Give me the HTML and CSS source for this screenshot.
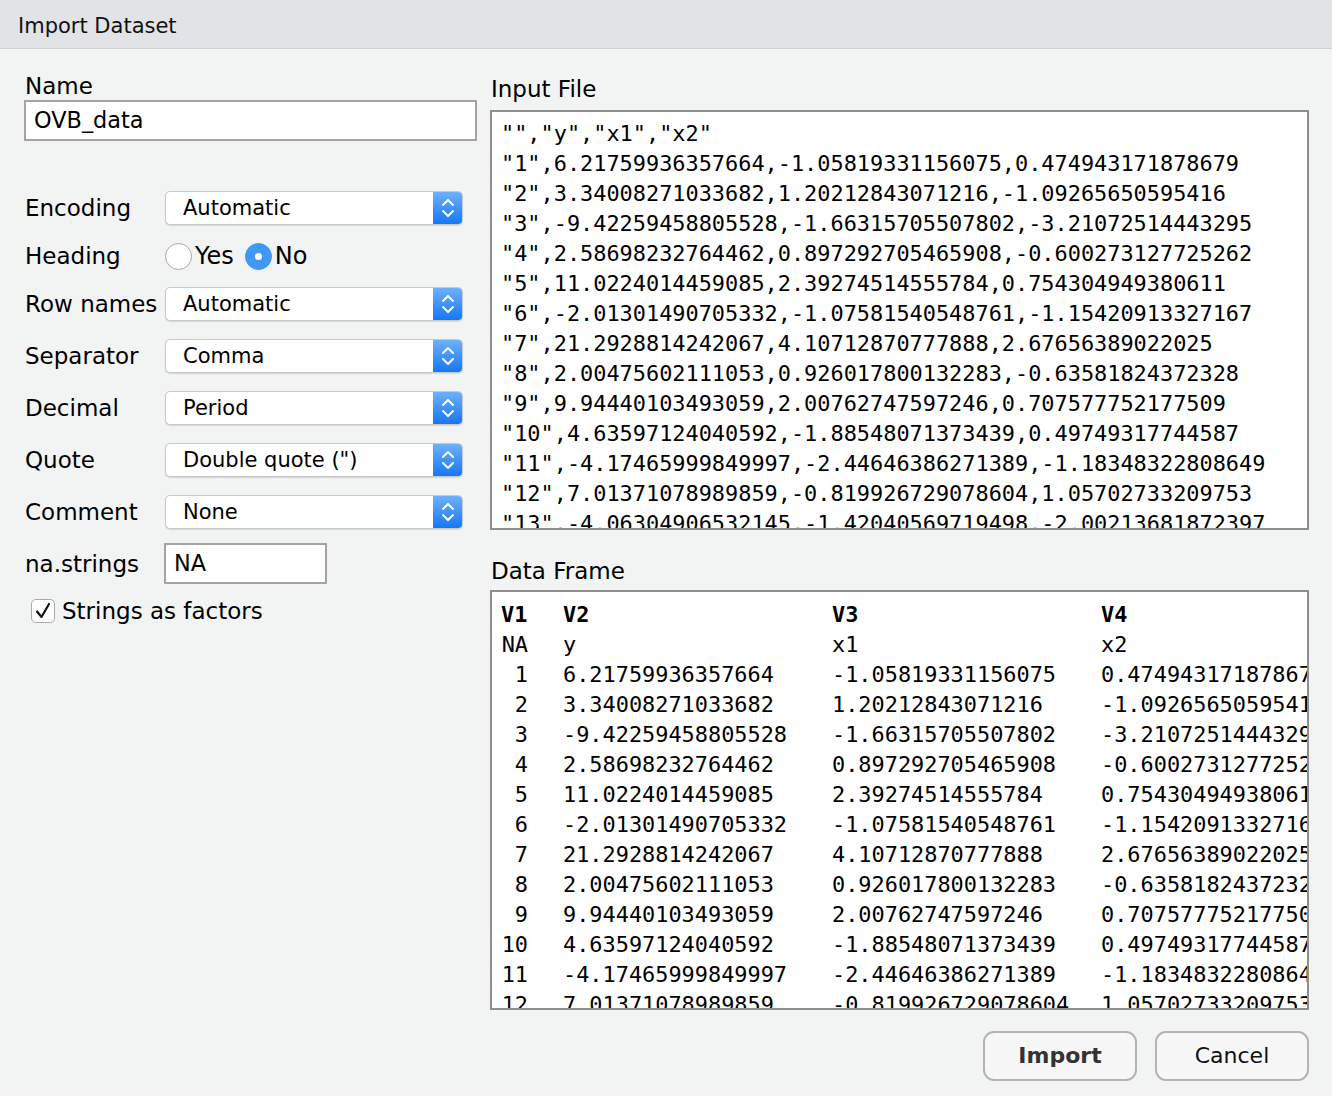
FILE: index.html
```html
<!DOCTYPE html>
<html>
<head>
<meta charset="utf-8">
<title>Import Dataset</title>
<link rel="stylesheet" href="styles.css">
</head>
<body>
<div class="window">
  <div class="titlebar">Import Dataset</div>
  <div class="main">
    <div class="left">
      <div class="label name-label">Name</div>
      <div class="textbox name-box">OVB_data</div>
      <div class="form">
        <div class="label">Encoding</div>
        <div class="select"><span class="sel-text">Automatic</span><span class="sel-btn"><svg width="14" height="24" viewBox="0 0 14 24"><path d="M2 9 L7 4 L12 9 M2 15 L7 20 L12 15" fill="none" stroke="#fff" stroke-width="2" stroke-linecap="round" stroke-linejoin="round"/></svg></span></div>

        <div class="label">Heading</div>
        <div class="radios">
          <span class="radio"></span><span class="radio-label">Yes</span>
          <span class="radio checked"></span><span class="radio-label">No</span>
        </div>

        <div class="label">Row names</div>
        <div class="select"><span class="sel-text">Automatic</span><span class="sel-btn"><svg width="14" height="24" viewBox="0 0 14 24"><path d="M2 9 L7 4 L12 9 M2 15 L7 20 L12 15" fill="none" stroke="#fff" stroke-width="2" stroke-linecap="round" stroke-linejoin="round"/></svg></span></div>

        <div class="label">Separator</div>
        <div class="select"><span class="sel-text">Comma</span><span class="sel-btn"><svg width="14" height="24" viewBox="0 0 14 24"><path d="M2 9 L7 4 L12 9 M2 15 L7 20 L12 15" fill="none" stroke="#fff" stroke-width="2" stroke-linecap="round" stroke-linejoin="round"/></svg></span></div>

        <div class="label">Decimal</div>
        <div class="select"><span class="sel-text">Period</span><span class="sel-btn"><svg width="14" height="24" viewBox="0 0 14 24"><path d="M2 9 L7 4 L12 9 M2 15 L7 20 L12 15" fill="none" stroke="#fff" stroke-width="2" stroke-linecap="round" stroke-linejoin="round"/></svg></span></div>

        <div class="label">Quote</div>
        <div class="select"><span class="sel-text">Double quote (")</span><span class="sel-btn"><svg width="14" height="24" viewBox="0 0 14 24"><path d="M2 9 L7 4 L12 9 M2 15 L7 20 L12 15" fill="none" stroke="#fff" stroke-width="2" stroke-linecap="round" stroke-linejoin="round"/></svg></span></div>

        <div class="label">Comment</div>
        <div class="select"><span class="sel-text">None</span><span class="sel-btn"><svg width="14" height="24" viewBox="0 0 14 24"><path d="M2 9 L7 4 L12 9 M2 15 L7 20 L12 15" fill="none" stroke="#fff" stroke-width="2" stroke-linecap="round" stroke-linejoin="round"/></svg></span></div>

        <div class="label na-label">na.strings</div>
        <div class="textbox na-box">NA</div>
      </div>
      <div class="check-row">
        <span class="checkbox"><svg width="20" height="20" viewBox="0 0 20 20"><path d="M4 10.5 L8.5 16 L16 3" fill="none" stroke="#111" stroke-width="2.2" stroke-linecap="round" stroke-linejoin="round"/></svg></span>
        <span class="check-label">Strings as factors</span>
      </div>
    </div>

    <div class="right">
      <div class="label section-label">Input File</div>
      <div class="panel input-file">
<div class="line">"","y","x1","x2"</div>
<div class="line">"1",6.21759936357664,-1.05819331156075,0.474943171878679</div>
<div class="line">"2",3.34008271033682,1.20212843071216,-1.09265650595416</div>
<div class="line">"3",-9.42259458805528,-1.66315705507802,-3.21072514443295</div>
<div class="line">"4",2.58698232764462,0.897292705465908,-0.600273127725262</div>
<div class="line">"5",11.0224014459085,2.39274514555784,0.754304949380611</div>
<div class="line">"6",-2.01301490705332,-1.07581540548761,-1.15420913327167</div>
<div class="line">"7",21.2928814242067,4.10712870777888,2.67656389022025</div>
<div class="line">"8",2.00475602111053,0.926017800132283,-0.63581824372328</div>
<div class="line">"9",9.94440103493059,2.00762747597246,0.707577752177509</div>
<div class="line">"10",4.63597124040592,-1.88548071373439,0.49749317744587</div>
<div class="line">"11",-4.17465999849997,-2.44646386271389,-1.18348322808649</div>
<div class="line">"12",7.01371078989859,-0.819926729078604,1.05702733209753</div>
<div class="line">"13",-4.06304906532145,-1.42040569719498,-2.00213681872397</div>
      </div>

      <div class="label section-label df-label">Data Frame</div>
      <div class="panel data-frame">
        <div class="grid">
          <div class="c1 hd">V1</div><div class="hd">V2</div><div class="hd">V3</div><div class="hd">V4</div>
          <div class="c1">NA</div><div>y</div><div>x1</div><div>x2</div>
          <div class="c1">1</div><div>6.21759936357664</div><div>-1.05819331156075</div><div>0.474943171878679</div>
          <div class="c1">2</div><div>3.34008271033682</div><div>1.20212843071216</div><div>-1.09265650595416</div>
          <div class="c1">3</div><div>-9.42259458805528</div><div>-1.66315705507802</div><div>-3.21072514443295</div>
          <div class="c1">4</div><div>2.58698232764462</div><div>0.897292705465908</div><div>-0.600273127725262</div>
          <div class="c1">5</div><div>11.0224014459085</div><div>2.39274514555784</div><div>0.754304949380611</div>
          <div class="c1">6</div><div>-2.01301490705332</div><div>-1.07581540548761</div><div>-1.15420913327167</div>
          <div class="c1">7</div><div>21.2928814242067</div><div>4.10712870777888</div><div>2.67656389022025</div>
          <div class="c1">8</div><div>2.00475602111053</div><div>0.926017800132283</div><div>-0.63581824372328</div>
          <div class="c1">9</div><div>9.94440103493059</div><div>2.00762747597246</div><div>0.707577752177509</div>
          <div class="c1">10</div><div>4.63597124040592</div><div>-1.88548071373439</div><div>0.49749317744587</div>
          <div class="c1">11</div><div>-4.17465999849997</div><div>-2.44646386271389</div><div>-1.18348322808649</div>
          <div class="c1">12</div><div>7.01371078989859</div><div>-0.819926729078604</div><div>1.05702733209753</div>
          <div class="c1">13</div><div>-4.06304906532145</div><div>-1.42040569719498</div><div>-2.00213681872397</div>
        </div>
      </div>

      <div class="buttons">
        <div class="btn btn-default">Import</div>
        <div class="btn">Cancel</div>
      </div>
    </div>
  </div>
</div>
</body>
</html>
```

FILE: styles.css
```css
html, body {
  margin: 0;
  padding: 0;
}
body {
  width: 1332px;
  height: 1096px;
  overflow: hidden;
  background: #f2f3f3;
  font-family: "DejaVu Sans", "Noto Sans", sans-serif;
  color: #000;
}
.window {
  width: 1332px;
  height: 1096px;
  background: #f2f3f3;
}
.titlebar {
  height: 48px;
  overflow: hidden;
  background: #e2e3e6;
  border-bottom: 1px solid #d2d2d4;
  font-size: 21px;
  line-height: 53px;
  padding-left: 18px;
  color: #111;
}
.main {
  display: flex;
  padding: 0 23px 0 24px;
  gap: 13px;
}
.left {
  width: 453px;
  display: flex;
  flex-direction: column;
}
.right {
  width: 819px;
  display: flex;
  flex-direction: column;
}
.label {
  font-size: 23px;
  line-height: 26px;
  white-space: nowrap;
}
.name-label {
  margin-top: 24px;
  padding-left: 1px;
}
.textbox {
  box-sizing: border-box;
  background: #fff;
  border: 2px solid #a3a3a3;
  font-size: 22.4px;
  line-height: 37px;
  padding-left: 8px;
}
.name-box {
  margin-top: 1px;
  height: 41px;
}
.form {
  display: grid;
  grid-template-columns: 141px 298px;
  row-gap: 18px;
  align-items: center;
  margin-top: 50px;
}
.form .label {
  padding-left: 1px;
}
.select {
  box-sizing: border-box;
  height: 34px;
  display: flex;
  align-items: stretch;
  background: #fff;
  border: 1px solid #c9c9c9;
  border-radius: 5px;
  box-shadow: 0 1px 1px rgba(0,0,0,0.12);
  overflow: hidden;
}
.sel-text {
  flex: 1;
  font-size: 21px;
  line-height: 32px;
  padding-left: 17px;
  white-space: nowrap;
}
.sel-btn {
  width: 29px;
  display: flex;
  align-items: center;
  justify-content: center;
  background: linear-gradient(#6db1fb, #1577f6);
}
.radios {
  display: flex;
  align-items: center;
  height: 26px;
}
.radio {
  box-sizing: border-box;
  width: 27px;
  height: 27px;
  border-radius: 50%;
  background: #fff;
  border: 1px solid #a9a9a9;
  position: relative;
}
.radio.checked {
  background: #3f97f6;
  border-color: #3f97f6;
  margin-left: 11px;
}
.radio.checked::after {
  content: "";
  position: absolute;
  left: 9px;
  top: 9px;
  width: 7px;
  height: 7px;
  border-radius: 50%;
  background: #fff;
}
.radio-label {
  font-size: 24px;
  line-height: 26px;
  margin-left: 3px;
}
.na-label {
  margin-top: -4px;
}
.na-box {
  width: 163px;
  height: 41px;
  margin-left: -1px;
  margin-top: -4px;
}
.check-row {
  display: flex;
  align-items: center;
  margin-top: 14px;
  padding-left: 7px;
}
.checkbox {
  box-sizing: border-box;
  width: 24px;
  height: 24px;
  border: 1px solid #a9a9a9;
  border-radius: 5px;
  background: #fff;
  display: flex;
  align-items: center;
  justify-content: center;
}
.check-label {
  font-size: 23px;
  line-height: 26px;
  margin-left: 7px;
}
.section-label {
  margin-top: 27px;
  padding-left: 1px;
}
.df-label {
  margin-top: 28px;
}
.panel {
  box-sizing: border-box;
  height: 420px;
  flex-shrink: 0;
  background: #fff;
  border: 2px solid #8e8e8e;
  overflow: hidden;
  font-family: "DejaVu Sans Mono", "Liberation Mono", monospace;
  font-size: 21.9px;
  line-height: 30px;
  white-space: nowrap;
  padding: 7px 0 0 9px;
}
.input-file {
  margin-top: 8px;
}
.data-frame {
  margin-top: 6px;
  padding-top: 8px;
}
.grid {
  display: grid;
  grid-template-columns: 62px 269px 269px max-content;
}
.grid .c1 {
  width: 27px;
  text-align: right;
}
.grid .hd {
  font-weight: bold;
}
.grid .c1.hd {
  text-align: left;
}
.buttons {
  display: flex;
  justify-content: flex-end;
  gap: 18px;
  margin-top: 21px;
  flex-shrink: 0;
}
.btn {
  box-sizing: border-box;
  width: 154px;
  height: 50px;
  flex-shrink: 0;
  border: 2px solid #b4b4b4;
  border-radius: 11px;
  background: #f7f7f7;
  font-size: 22px;
  line-height: 46px;
  text-align: center;
  color: #111;
}
.btn-default {
  font-weight: bold;
  color: #333;
}
```
